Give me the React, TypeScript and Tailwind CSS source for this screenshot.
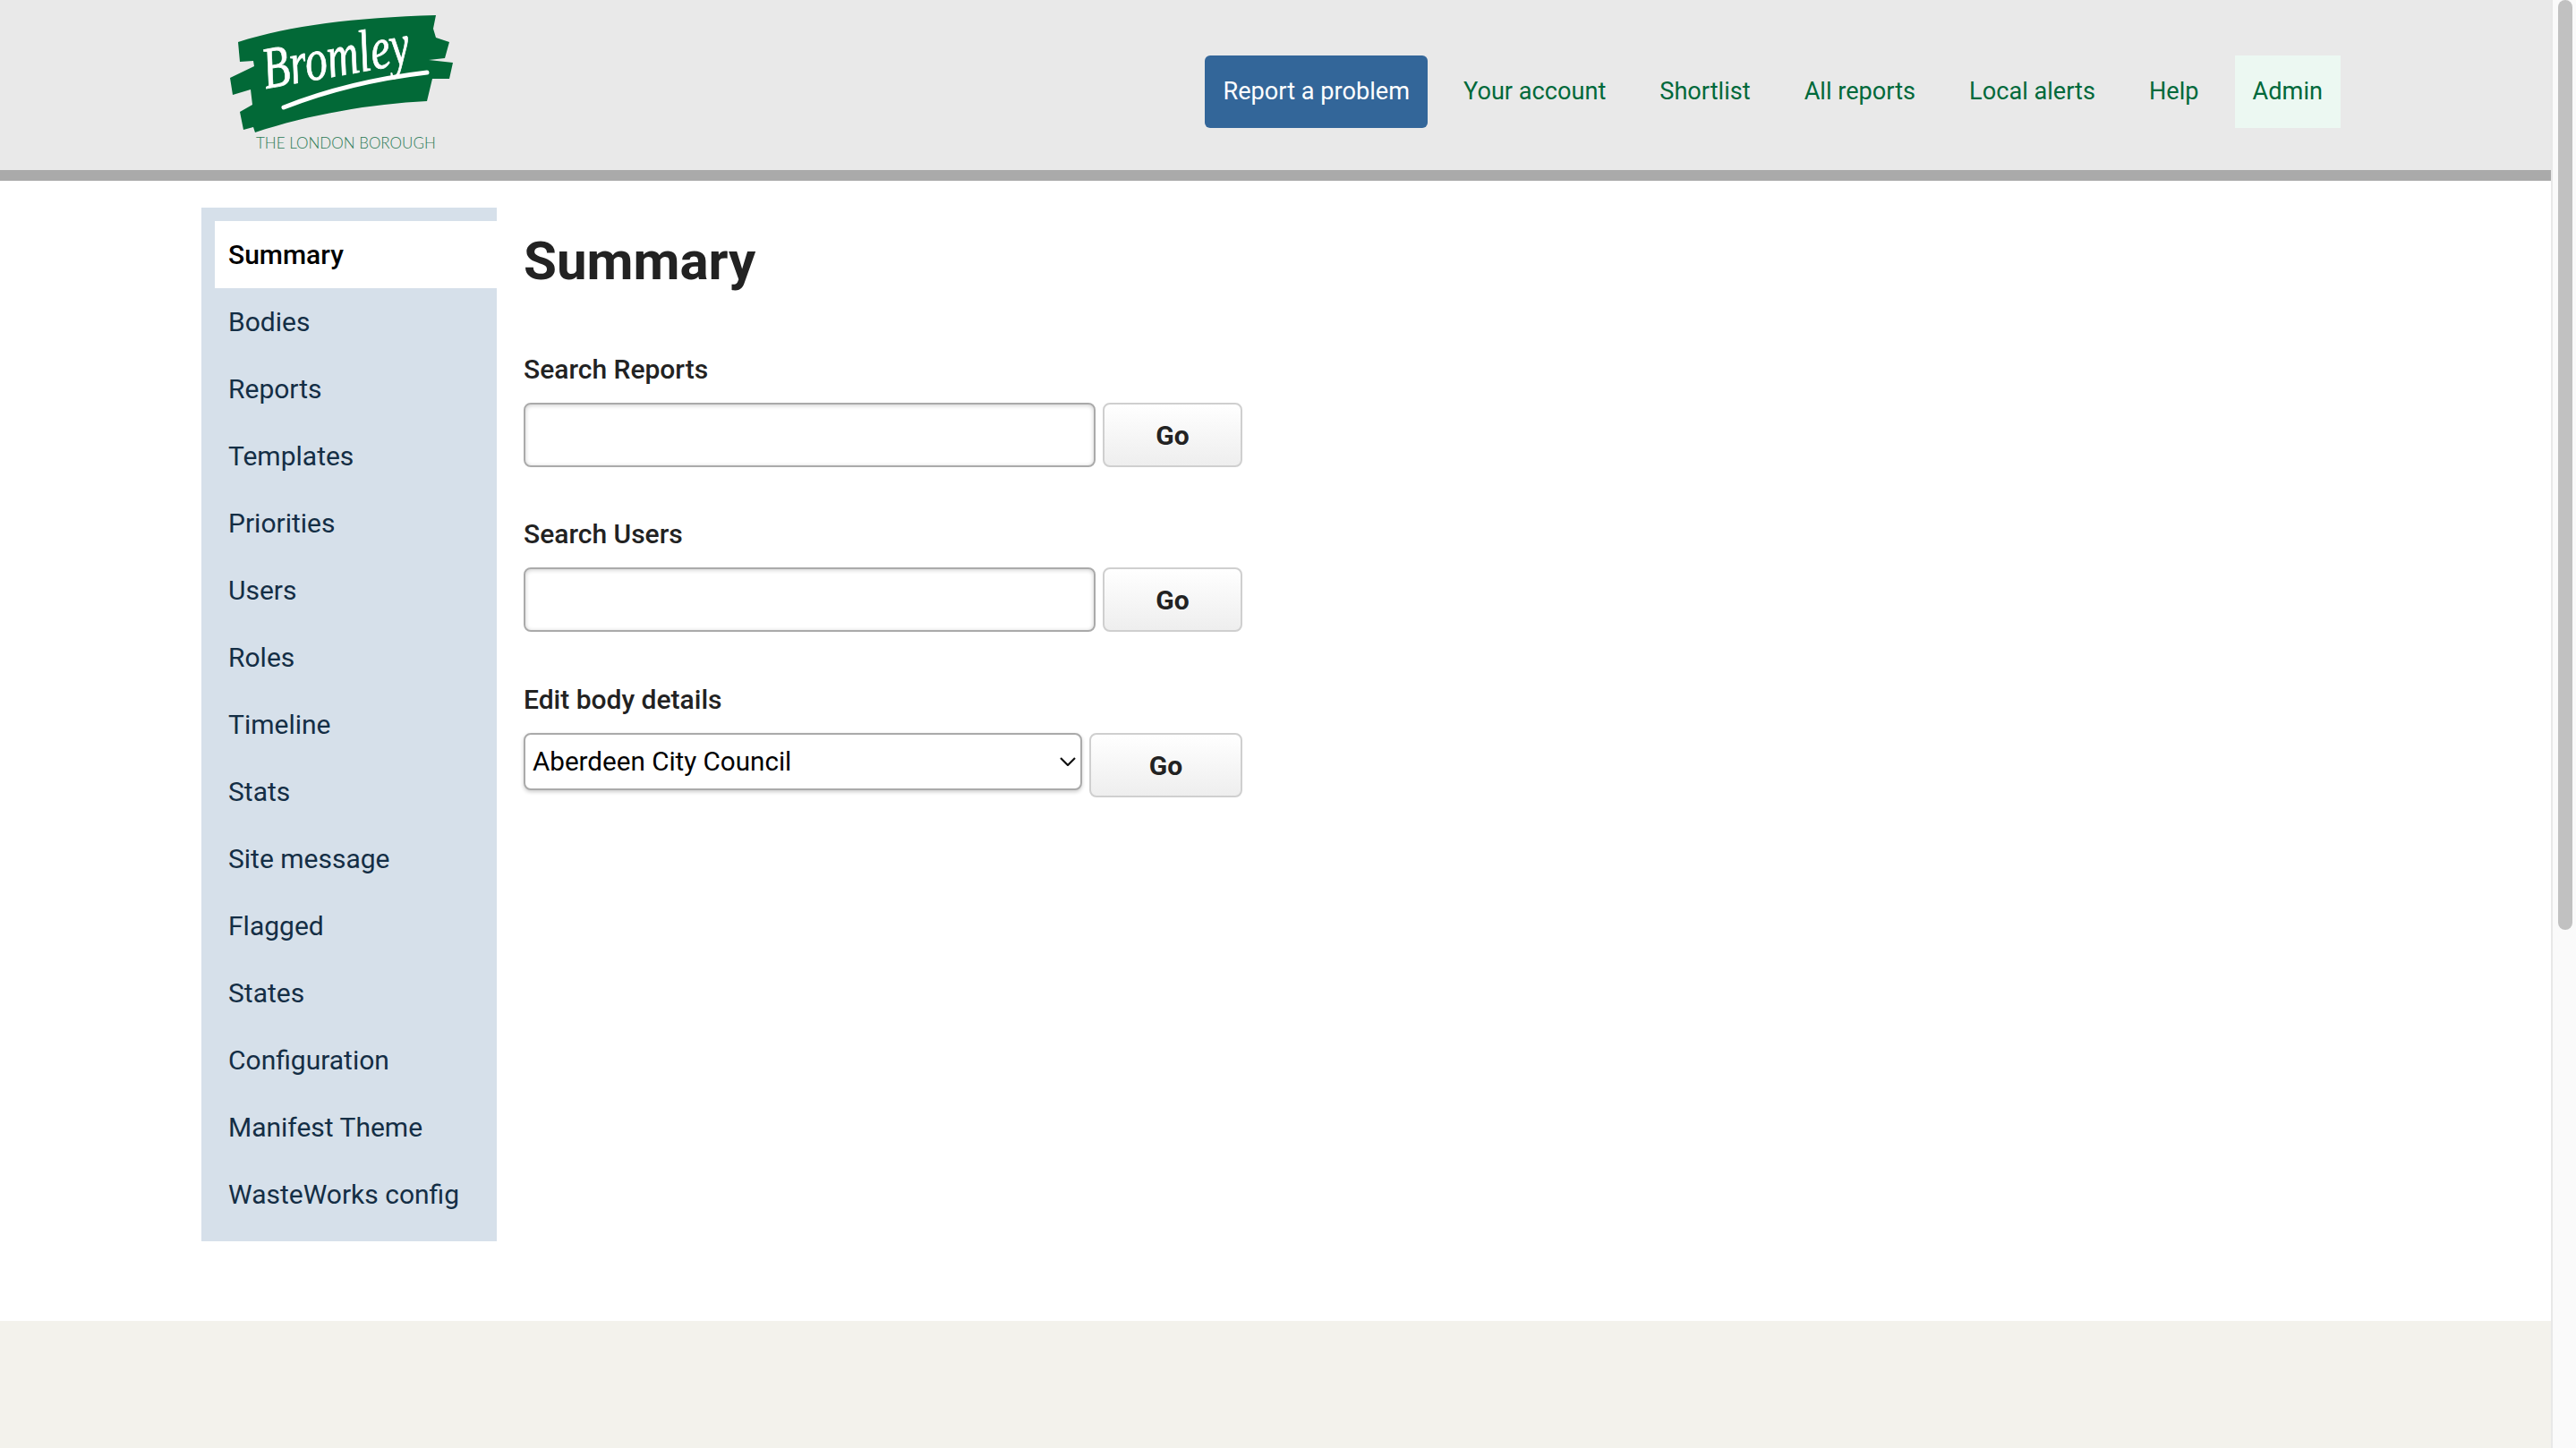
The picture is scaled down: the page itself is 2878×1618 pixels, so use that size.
const sideItems = [
  'Summary',
  'Bodies',
  'Reports',
  'Templates',
  'Priorities',
  'Users',
  'Roles',
  'Timeline',
  'Stats',
  'Site message',
  'Flagged',
  'States',
  'Configuration',
  'Manifest Theme',
  'WasteWorks config',
];

const navItems = ['Your account', 'Shortlist', 'All reports', 'Local alerts', 'Help'];

const Logo = () => (
  <div className="relative h-[190px] w-[300px] shrink-0">
    <svg viewBox="0 0 300 190" className="absolute inset-0 h-full w-full">
      <path
        fill="#026937"
        d="M41 47 C100 28 170 20 262 17 L259 32 L262 42 L277 47 L272 65 L254 67 L281 70 L277 88 L258 88 L252 113 C190 116 120 128 60 148 L58 142 L47 145 L43 125 L57 117 L55 100 L35 106 L32 87 L59 74 L58 68 L43 69 Z"
      />
      <text
        x="72"
        y="99"
        fill="#fff"
        stroke="#fff"
        strokeWidth="0.8"
        fontFamily='"Liberation Serif", serif'
        fontStyle="italic"
        fontSize="66"
        transform="rotate(-10 72 99)"
        textLength="166"
        lengthAdjust="spacingAndGlyphs"
      >
        Bromley
      </text>
      <path d="M92 120 C135 103 192 88 252 81" fill="none" stroke="#fff" strokeWidth="5" strokeLinecap="round" />
    </svg>
    <span className="absolute left-[61px] top-[150px] text-[17px] font-light leading-[20px] whitespace-nowrap text-[#2a7a55] [font-family:Lato,sans-serif]">
      THE LONDON BOROUGH
    </span>
  </div>
);

const GoButton = ({ width }: { width: string }) => (
  <button className={`h-[72px] ${width} rounded-[8px] border-2 border-[#cfcfcf] bg-gradient-to-b from-white to-[#eee] text-[30px] font-bold text-[#222]`}>
    Go
  </button>
);

const SearchRow = ({ label, spacing }: { label: string; spacing: string }) => (
  <div className={spacing}>
    <label className="block text-[30px] leading-[44px] font-medium text-[#222]">{label}</label>
    <div className="mt-[15px] flex gap-[8px]">
      <input
        type="text"
        className="h-[72px] w-[639px] rounded-[8px] border-2 border-[#aaa] bg-white shadow-[inset_0_1px_5px_rgba(0,0,0,0.2)]"
      />
      <GoButton width="w-[156px]" />
    </div>
  </div>
);

export default function App() {
  return (
    <div className="flex h-[1618px] overflow-hidden bg-white [font-family:Roboto,sans-serif]">
      <div className="flex w-[2850px] shrink-0 flex-col">
        <header className="flex h-[202px] shrink-0 justify-between border-b-[12px] border-[#aaa] bg-[#e9e9e9] pl-[225px] pr-[235px]">
          <Logo />
          <nav className="mt-[62px] flex h-[81px] items-center gap-[20px] text-[27.15px] text-[#00693b]">
            <a className="flex h-full items-center rounded-[6px] bg-[#336699] px-[20px] text-white">Report a problem</a>
            {navItems.map((item) => (
              <a key={item} className="flex h-full items-center px-[20px]">
                {item}
              </a>
            ))}
            <a className="flex h-full items-center bg-[#ecf8f2] px-[20px]">Admin</a>
          </nav>
        </header>

        <main className="flex flex-1 items-start pl-[225px] pt-[30px]">
          <ul className="w-[330px] shrink-0 bg-[#d6e0ea] py-[15px] pl-[15px] text-[30px] text-[#142e45]">
            {sideItems.map((item, i) => (
              <li
                key={item}
                className={`flex h-[75px] items-center pl-[15px] ${i === 0 ? 'bg-white font-medium text-black' : ''}`}
              >
                {item}
              </li>
            ))}
          </ul>

          <div className="ml-[30px] w-[803px]">
            <h1 className="mb-[64px] mt-[25px] text-[60px] leading-[70px] font-bold text-[#222]">Summary</h1>
            <SearchRow label="Search Reports" spacing="mb-[53px]" />
            <SearchRow label="Search Users" spacing="mb-[54px]" />
            <label className="block text-[30px] leading-[44px] font-medium text-[#222]">Edit body details</label>
            <div className="mt-[15px] flex items-start justify-between">
              <div className="relative w-[624px]">
                <select className="h-[64px] w-full appearance-none rounded-[8px] border-2 border-[#aaa] bg-white pl-[8px] text-[29.6px] text-black shadow-[0_2px_4px_rgba(0,0,0,0.2)]">
                  <option>Aberdeen City Council</option>
                </select>
                {/* chevron sits over the select since appearance-none drops the native one */}
                <svg viewBox="0 0 18 10" className="pointer-events-none absolute right-[7px] top-[27px] h-[10px] w-[18px]" fill="none" stroke="#111" strokeWidth="2.2">
                  <path d="M1 1 L9 9 L17 1" />
                </svg>
              </div>
              <GoButton width="w-[171px]" />
            </div>
          </div>
        </main>

        <footer className="h-[142px] shrink-0 bg-[#f3f2ec]" />
      </div>

      <div className="w-[28px] shrink-0 border-l-2 border-[#e8e8e8] bg-[#fafafa] pl-[6px]">
        <div className="h-[1039px] w-[16px] rounded-b-full rounded-t-full bg-[#c1c1c1]" />
      </div>
    </div>
  );
}
